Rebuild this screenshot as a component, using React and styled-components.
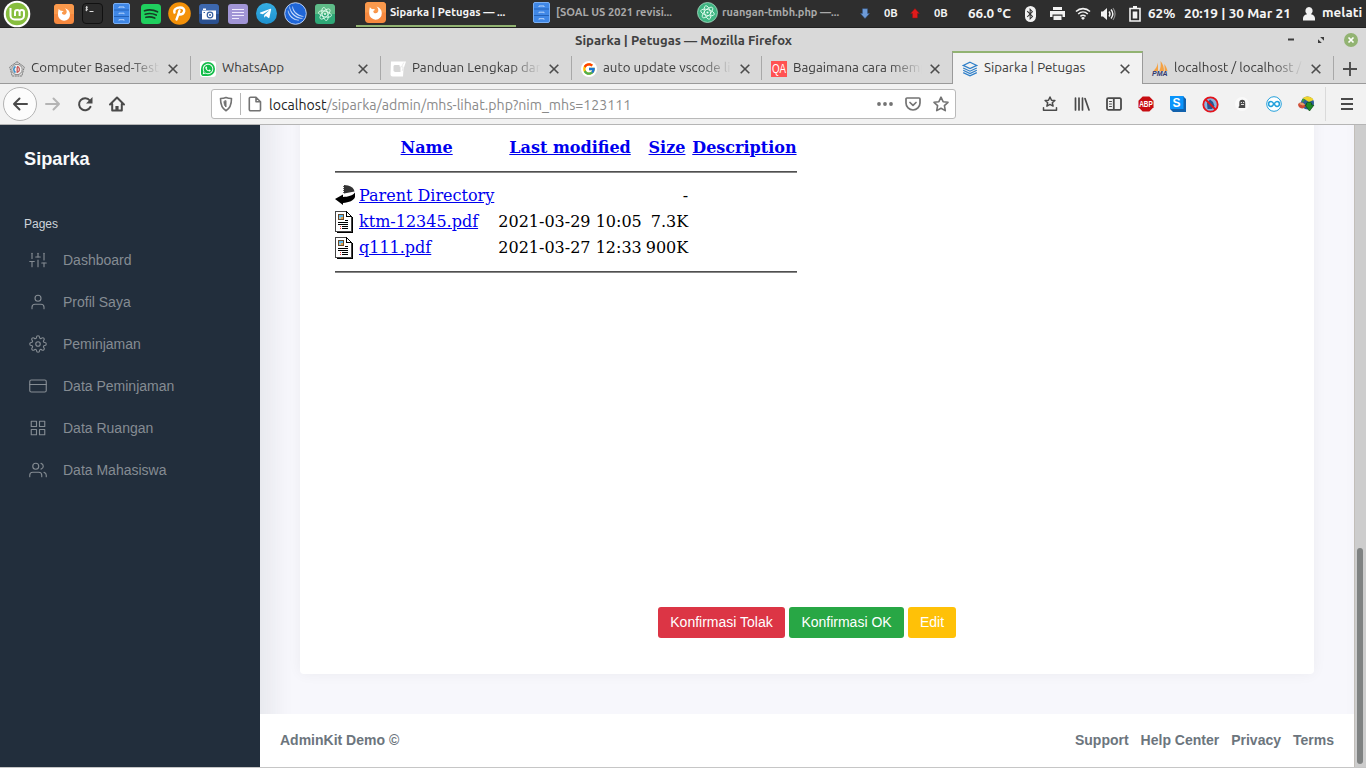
import React from "react";
import styled, { createGlobalStyle, css } from "styled-components";
import { FiUser, FiSettings, FiCreditCard, FiGrid, FiUsers, FiSliders } from "react-icons/fi";
import { FaTelegramPlane, FaWhatsapp, FaBluetoothB } from "react-icons/fa";
import { FcGoogle } from "react-icons/fc";

const Global = createGlobalStyle`
  * { box-sizing: border-box; }
  html, body { margin: 0; padding: 0; overflow: hidden; }
  svg { display: block; flex: none; overflow: visible; }
`;

const UI = `Ubuntu, "Noto Sans", "Open Sans", sans-serif`;

/* ---------- desktop shell ---------- */
const Screen = styled.div`
  width: 1366px;
  height: 768px;
  display: flex;
  flex-direction: column;
  overflow: hidden;
  background: #f1f1f1;
  font-family: ${UI};
`;

const Label = styled.span`
  display: block;
  flex: none;
  width: ${(p) => p.$w}px;
  margin-left: ${(p) => p.$ml || 0}px;
  font-size: ${(p) => p.$size || 13}px;
  font-weight: ${(p) => p.$weight || 400};
  line-height: 18px;
  color: ${(p) => p.$color || "inherit"};
  white-space: nowrap;
`;

const Panel = styled.header`
  height: 28px;
  flex: none;
  display: flex;
  align-items: center;
  background: #2e2e2e;
  border-bottom: 1px solid #222;
  color: #f4f4f4;
  ${Label} { margin-bottom: 2px; }
`;

const Slot = styled.div`
  width: ${(p) => p.$w}px;
  height: 100%;
  flex: none;
  display: flex;
  align-items: center;
  justify-content: center;
  margin-left: ${(p) => p.$ml || 0}px;
`;

const Task = styled.div`
  width: 160px;
  height: 27px;
  flex: none;
  display: flex;
  align-items: center;
  gap: 4px;
  padding-left: 9px;
  margin-left: ${(p) => p.$ml || 0}px;
  border-bottom: 2px solid ${(p) => (p.$active ? "#92b372" : "transparent")};
`;

/* ---------- browser chrome ---------- */
const TitleBar = styled.div`
  height: 23px;
  flex: none;
  display: flex;
  align-items: center;
  background: #d9d9d9;
  color: #404040;
`;

const TabStrip = styled.div`
  height: 33px;
  flex: none;
  display: flex;
  background: #d9d9d9;
`;

const Tab = styled.div`
  width: ${(p) => p.$w}px;
  flex: none;
  display: flex;
  align-items: center;
  padding: 3px 0 0 9px;
  color: #3c3c3c;
  border-bottom: 1px solid #9a9a9a;
  ${(p) =>
    p.$sep &&
    css`
      background: linear-gradient(#a8a8a8, #a8a8a8) right 5px / 1px 24px no-repeat;
    `}
  ${(p) =>
    p.$active &&
    css`
      background: #f2f2f2;
      border: 1px solid #9a9a9a;
      border-top: 2px solid #92b372;
      border-bottom: 0;
      padding-top: 0;
    `}
`;

const TabText = styled.div`
  width: 130px;
  margin: 0 0 1px 6px;
  white-space: nowrap;
  font-size: 13.33px;
  line-height: 20px;
  ${(p) => p.$fade && css`mask-image: linear-gradient(to right, #000 98px, transparent 129px);`}
`;

const CloseSlot = styled.div`
  width: 20px;
  margin-left: ${(p) => (p.$fade ? 2 : 1)}px;
  display: flex;
  justify-content: center;
`;

const Toolbar = styled.div`
  height: 41px;
  flex: none;
  display: flex;
  align-items: center;
  background: #f2f2f2;
  border-bottom: 1px solid #b5b5b5;
  color: #4a4a4a;
`;

const BackButton = styled.div`
  width: 34px;
  height: 34px;
  margin-left: 3px;
  flex: none;
  border-radius: 50%;
  border: 1px solid #b3b3b3;
  background: #fcfcfc;
  display: flex;
  align-items: center;
  justify-content: center;
`;

const UrlBar = styled.div`
  width: 745px;
  height: 30px;
  margin-left: 78px;
  flex: none;
  display: flex;
  align-items: center;
  background: #fff;
  border: 1px solid #b9b9b9;
  border-radius: 3px;
  color: #737373;
`;

const Divider = styled.div`
  width: 1px;
  height: ${(p) => p.$h}px;
  flex: none;
  background: ${(p) => p.$color};
`;

const Url = styled.div`
  width: 600px;
  margin: 2px 0 0 1px;
  font-size: 14.15px;
  line-height: 20px;
  color: #8a8a8a;
  white-space: nowrap;
  b { font-weight: 400; color: #1f1f1f; }
`;

/* ---------- page ---------- */
const Page = styled.div`
  height: 642px;
  flex: none;
  display: flex;
  overflow: hidden;
  font-family: "Liberation Sans", Arial, sans-serif;
  font-size: 14px;
  line-height: 21px;
`;

const Sidebar = styled.nav`
  width: 260px;
  flex: none;
  background: #222e3c;
  padding-top: 21px;
`;

const Brand = styled.div`
  padding-left: 24px;
  font-size: 18.2px;
  line-height: 27px;
  font-weight: 700;
  color: #f8f9fa;
`;

const NavHeader = styled.div`
  margin-top: 42px;
  padding-left: 24px;
  font-size: 12px;
  line-height: 18px;
  color: #ced4da;
`;

const NavList = styled.div`
  padding-top: 6px;
`;

const NavItem = styled.div`
  height: 42px;
  display: flex;
  align-items: center;
  padding-left: 29px;
  gap: 16px;
  color: #858c93;
  svg { width: 18px; height: 18px; stroke-width: 1.5; }
`;

const Main = styled.main`
  width: 1094px;
  height: 682px;
  margin-top: -40px;
  flex: none;
  display: flex;
  flex-direction: column;
  justify-content: space-between;
  background: #f7f7fc;
  box-shadow: inset 12px 0 24px 0 rgba(33, 37, 41, 0.075);
`;

const Card = styled.section`
  height: 589px;
  margin: 0 40px;
  padding: 49px 32px 36px;
  display: flex;
  flex-direction: column;
  justify-content: space-between;
  background: #fff;
  border-radius: 4px;
  box-shadow: 0 0 14px 0 rgba(33, 37, 41, 0.05);
`;

const Listing = styled.table`
  align-self: flex-start;
  border-spacing: 2px;
  font-family: "DejaVu Serif", serif;
  font-size: 16px;
  line-height: 20px;
  color: #000;
  tr:first-child { height: 24px; }
  th, td { padding: 1px; white-space: nowrap; }
  td { vertical-align: middle; }
  td[data-num] { text-align: right; }
  a { color: #0000ee; text-decoration: underline; }
`;

const Rule = styled.hr`
  height: 2px;
  margin: 8px 0;
  border: 0;
  border-top: 1px solid #505050;
  background: #868686;
`;

const Actions = styled.div`
  display: flex;
  justify-content: center;
  gap: 4px;
`;

const Button = styled.button`
  width: ${(p) => p.$w}px;
  height: 31px;
  padding: 0;
  border: 0;
  border-radius: 3px;
  font: 14px/21px "Liberation Sans", Arial, sans-serif;
  color: #fff;
  background: ${(p) => p.$bg};
`;

const Footer = styled.footer`
  height: 53px;
  padding: 0 20px;
  display: flex;
  align-items: center;
  justify-content: space-between;
  background: #fff;
  color: #6c757d;
  font-weight: 700;
`;

const FooterLinks = styled.div`
  display: flex;
  gap: 12px;
`;

const ScrollTrack = styled.div`
  width: 12px;
  flex: none;
  background: #cdcdcd;
  border-left: 1px solid #c2beb9;
  padding: 423px 0 0 2px;
`;

const ScrollThumb = styled.div`
  width: 6px;
  height: 216px;
  border-radius: 3px;
  background: #7f8282;
`;

const BottomEdge = styled.div`
  flex: 1;
  background: #c6c6c6;
`;

/* ---------- drawings ---------- */
const Mint = () => (
  <svg width="28" height="28" viewBox="0 0 28 28">
    <circle cx="14" cy="14" r="13.3" fill="#fff" />
    <circle cx="14" cy="14" r="11.2" fill="#87be3f" />
    <path d="M7.500 8v7.500a4 4 0 0 0 4 4h5.500a4 4 0 0 0 4-4v-3.200a2.200 2.200 0 0 0-4.400 0V16M16.600 12.300a2.300 2.300 0 0 0-4.600 0V16" fill="none" stroke="#fff" strokeWidth="2" />
  </svg>
);
const FirefoxTile = ({ s = 20 }) => (
  <svg width={s} height={s} viewBox="0 0 20 20">
    <rect width="20" height="20" rx="3.5" fill="#f7893f" />
    <path d="M0 10V3.500A3.500 3.500 0 0 1 3.500 0h13A3.500 3.500 0 0 1 20 3.500V10z" fill="#fa994c" />
    <path d="M4.600 5l2.200 1.800c1.200-.3 2.400 0 2.900.8-1.400.3-2 1-1.700 1.900.5 1.300 2.700 1.600 3.900.5 1.400-1.400 1-3.900-.9-5.700 3 .8 5 3.200 5 6.400a6 6 0 0 1-12 .2c0-2 .1-3.900.6-5.900z" fill="#fff" />
  </svg>
);
const Terminal = () => (
  <svg width="21" height="21" viewBox="0 0 21 21">
    <rect x=".5" y=".5" width="20" height="20" rx="3.5" fill="#2b2b2b" stroke="#111" />
    <path d="M5.900 4.300c-2.300-.7-2.600 1-1.300 1.300 1.500.3 1.300 2-1.200 1.400M4.600 3.200v5M7.500 8.500h4" stroke="#ddd" fill="none" />
  </svg>
);
const Cabinet = () => (
  <svg width="17" height="21" viewBox="0 0 17 21">
    <rect x=".5" y=".5" width="16" height="20" rx="1.5" fill="#3f87e6" stroke="#79aef2" />
    <path d="M1 7h15M1 13.500h15" stroke="#2462b8" />
    <path d="M6 5V4h5v1M6 11.200v-1h5v1M6 17.700v-1h5v1" stroke="#b9d5fb" fill="none" />
  </svg>
);
const Spotify = () => (
  <svg width="20" height="20" viewBox="0 0 20 20">
    <rect width="20" height="20" rx="3.5" fill="#1fd05e" />
    <path d="M3.500 6.800c4.500-1.500 9-1 13 1M4.200 10.200c4-1.200 7.800-.7 11 .9M4.900 13.300c3.200-.9 6-.5 8.800.8" stroke="#163d25" strokeWidth="1.7" strokeLinecap="round" fill="none" />
  </svg>
);
const PCircle = () => (
  <svg width="23" height="23" viewBox="0 0 23 23">
    <circle cx="11.5" cy="11.5" r="11.3" fill="#f39109" />
    <path d="M6.500 10.500c-1-3 2-5 5.500-5 3.200 0 4.600 1.600 4.200 3.800-.5 2.500-2.700 3.400-5.400 3.200M11.500 8.500c-.8 3-1.800 6-3 9" stroke="#fff" strokeWidth="2.4" fill="none" strokeLinecap="round" />
  </svg>
);
const Camera = () => (
  <svg width="20" height="20" viewBox="0 0 20 20">
    <rect width="20" height="20" rx="3.5" fill="#2b5190" />
    <path d="M0 10V3.500A3.500 3.500 0 0 1 3.500 0h13A3.500 3.500 0 0 1 20 3.500V10z" fill="#3d68ae" />
    <path d="M3 6.500h14v9H3zM4 4.500h3V6H4z" fill="#fff" />
    <circle cx="11" cy="11" r="3.4" fill="#345e9f" />
    <circle cx="11" cy="11" r="2.2" fill="#fff" />
    <circle cx="11" cy="11" r="1" fill="#345e9f" />
    <path d="M4.500 8.500h1.500" stroke="#345e9f" />
  </svg>
);
const Notes = () => (
  <svg width="20" height="20" viewBox="0 0 20 20">
    <rect width="20" height="20" rx="3" fill="#a195d6" />
    <path d="M4 5.500h12M4 8.500h12M4 11.500h12M4 14.500h7" stroke="#eeeafd" strokeWidth="1.2" />
  </svg>
);
const TelegramBase = styled.div`
  width: 21px;
  height: 21px;
  border-radius: 50%;
  background: linear-gradient(#36aee2, #1e92cf);
  color: #fff;
  font-size: 13px;
  display: flex;
  align-items: center;
  justify-content: center;
  padding-right: 2px;
`;
const Swoosh = () => (
  <svg width="23" height="23" viewBox="0 0 23 23">
    <circle cx="11.5" cy="11.5" r="10.8" fill="#1f66d8" stroke="#c8d9f5" strokeWidth=".9" />
    <path d="M5.500 4.500C6.500 10 11 15 18.500 16.500 12 17 6 12 5.500 4.500zM8.500 4.500C9.500 9 13 13 19.500 14.500 13 14.500 8.500 10 8.500 4.500zM4 8.500c1.500 5 5 8.500 11 9.700-6 .3-10.500-4-11-9.700z" stroke="#dce9ff" strokeWidth=".3" fill="#dce9ff" />
  </svg>
);
const Atom = ({ round, s = 20 }) => (
  <svg width={s} height={s} viewBox="0 0 20 20">
    {round ? (
      <circle cx="10" cy="10" r="9.5" fill="#3fb582" stroke="#a9dcc4" strokeWidth=".8" />
    ) : (
      <>
        <rect width="20" height="20" rx="3.5" fill="#2ea877" />
        <path d="M0 10V3.500A3.500 3.500 0 0 1 3.500 0h13A3.500 3.500 0 0 1 20 3.500V10z" fill="#5fbb88" />
      </>
    )}
    <g fill="none" stroke="#e8fff3" strokeWidth=".8">
      <ellipse cx="10" cy="10" rx="6.6" ry="2.8" transform="rotate(15 10 10)" />
      <ellipse cx="10" cy="10" rx="6.6" ry="2.8" transform="rotate(75 10 10)" />
      <ellipse cx="10" cy="10" rx="6.6" ry="2.8" transform="rotate(135 10 10)" />
    </g>
    <circle cx="10" cy="10" r="1" fill="#e8fff3" />
  </svg>
);
const Arrow = ({ up }) => (
  <svg width="10" height="11" viewBox="0 0 10 11">
    {up ? (
      <path d="M5 .5L9.500 5.500H7.500V10h-5V5.500H.5z" fill="#e01b1b" stroke="#8d1212" strokeWidth=".5" />
    ) : (
      <path d="M5 10.500L.5 5.500h2V.7h5v4.800h2z" fill="#6d9bd8" stroke="#35588d" strokeWidth=".5" />
    )}
  </svg>
);
const Bluetooth = styled.div`
  width: 11px;
  height: 16px;
  border-radius: 6px;
  background: #f2f2f2;
  color: #2e2e2e;
  font-size: 12px;
  display: flex;
  align-items: center;
  justify-content: center;
`;
const Printer = () => (
  <svg width="15" height="13" viewBox="0 0 15 13">
    <path d="M3 0h9v3H3zM0 4h15v6h-2.500V7.500h-10V10H0zM3.500 8.800h8V13h-8z" fill="#f2f2f2" />
  </svg>
);
const Wifi = () => (
  <svg width="16" height="13" viewBox="0 0 16 13">
    <path d="M1 4.500C5 .6 11 .6 15 4.500M3.200 7C6 4.400 10 4.400 12.800 7M5.400 9.300c1.600-1.300 3.600-1.300 5.200 0" stroke="#f2f2f2" strokeWidth="1.6" fill="none" />
    <path d="M6 11l2-1.300L10 11l-2 2z" fill="#f2f2f2" />
  </svg>
);
const Sound = () => (
  <svg width="16" height="14" viewBox="0 0 16 14">
    <path d="M1 4.500h2L7 1v12L3 9.500H1z" fill="#f2f2f2" />
    <path d="M9 4.500c1.200 1.500 1.200 3.500 0 5M11 2.500c2.200 2.700 2.200 6.300 0 9" stroke="#f2f2f2" strokeWidth="1.4" fill="none" />
    <path d="M13 1.200c2.500 3.500 2.500 8.100 0 11.600" stroke="#888" strokeWidth="1.2" fill="none" />
  </svg>
);
const Battery = () => (
  <svg width="12" height="16" viewBox="0 0 12 16">
    <path d="M1 2.500h10V15H1z" fill="none" stroke="#f2f2f2" strokeWidth="1.6" />
    <path d="M4 0h4v2H4zM3.700 5.500h4.600v7H3.700z" fill="#f2f2f2" />
  </svg>
);
const Person = () => (
  <svg width="12" height="14" viewBox="0 0 12 14">
    <path d="M6 0a3.600 3.900 0 0 1 2 7.200c2.500.6 4 2 4 4.300V13.500H0v-2c0-2.300 1.500-3.700 4-4.300A3.600 3.900 0 0 1 6 0z" fill="#f2f2f2" />
  </svg>
);
const Minimize = () => (
  <svg width="6" height="3" viewBox="0 0 6 3"><path d="M0 .5h6v2H0z" fill="#3c3c3c" /></svg>
);
const Restore = () => (
  <svg width="6" height="6" viewBox="0 0 7 7"><path d="M2.500 0H7v4.500zM0 2.500V7h4.500z" fill="#3c3c3c" /></svg>
);
const WindowClose = () => (
  <svg width="14" height="14" viewBox="0 0 14 14">
    <circle cx="7" cy="7" r="7" fill="#92b372" />
    <path d="M4.500 4.500l5 5M9.500 4.500l-5 5" stroke="#fff" strokeWidth="1.7" />
  </svg>
);
const Close = () => (
  <svg width="10" height="10" viewBox="0 0 10 10"><path d="M.7.700l8.600 8.600M9.300.700L.7 9.300" stroke="#4c4c4c" strokeWidth="1.6" /></svg>
);
const Crest = () => (
  <svg width="16" height="16" viewBox="0 0 16 16">
    <path d="M8 .7L15.300 6 12.800 15H3.200L.7 6z" fill="#dadada" stroke="#777" strokeDasharray="2 .6" />
    <circle cx="8" cy="8.5" r="5.2" fill="#eee" stroke="#888" />
    <path d="M6.500 5.500a3.500 3.500 0 0 0 0 6" stroke="#3d8fc4" strokeWidth="1.6" fill="none" />
    <path d="M8 5.500a3 3 0 0 1 1 5.500M8.200 6v6" stroke="#c85757" strokeWidth="1.3" fill="none" />
  </svg>
);
const WhatsappTile = styled.div`
  width: 16px;
  height: 16px;
  border-radius: 3px;
  background: #fff;
  display: flex;
  align-items: center;
  justify-content: center;
`;
const WhatsappBubble = styled.span`
  width: 14px;
  height: 14px;
  border-radius: 50% 50% 50% 20%;
  background: #12bd49;
  color: #fff;
  font-size: 12px;
  display: flex;
  align-items: center;
  justify-content: center;
`;
const Guide = () => (
  <svg width="16" height="16" viewBox="0 0 16 16">
    <path d="M1 .5h15L13.500 8 13 15.500H2.500A2 2 0 0 1 .5 13.500z" fill="#fff" />
    <path d="M4.500 4h5v1.500h1v5.500H5L3.500 10V5z" fill="#d6d6d6" />
    <path d="M13.800 1.500L11.500 6h1.700l-1 4" stroke="#e2e2e2" strokeWidth=".7" fill="none" />
  </svg>
);
const GoogleTile = styled.div`
  width: 16px;
  height: 16px;
  border-radius: 50%;
  background: #fff;
  font-size: 14px;
  display: flex;
  align-items: center;
  justify-content: center;
`;
const Qa = () => (
  <svg width="16" height="16" viewBox="0 0 16 16">
    <rect width="16" height="16" fill="#ff5252" />
    <text x=".9" y="12" textLength="14.2" lengthAdjust="spacingAndGlyphs" fontFamily="Liberation Sans" fontSize="12" fill="#fff">QA</text>
  </svg>
);
const Stack = () => (
  <svg width="16" height="16" viewBox="0 0 16 16" fill="none" stroke="#2f7fc8" strokeWidth="1.2">
    <path d="M8 1.200L14.800 4.400 8 7.600 1.200 4.400zM1.200 7L8 10.200 14.800 7M1.200 9.300L8 12.500l6.800-3.200M1.200 11.600L8 14.800l6.800-3.200" />
  </svg>
);
const Sail = () => (
  <svg width="16" height="16" viewBox="0 0 16 16">
    <path d="M6 1.500v8.500H1.500C4 7.500 5.300 5 6 1.500zM8.500 0c2.500 3 3.500 6 3.500 10H7.200c1.600-3 1.800-6 1.300-10zM12.300 3c1.700 2.300 2.700 4.500 3.200 7h-2.700z" fill="#f5a243" />
    <text x="0" y="15" textLength="15.5" lengthAdjust="spacingAndGlyphs" fontFamily="Liberation Sans" fontWeight="700" fontStyle="italic" fontSize="6.5" fill="#2f376f">PMA</text>
  </svg>
);
const Plus = () => (
  <svg width="14" height="14" viewBox="0 0 14 14"><path d="M7 0v14M0 7h14" stroke="#4c4c4c" strokeWidth="1.9" /></svg>
);
const Stroke = ({ d, s = 16, w = 2, c = "currentColor", children }) => (
  <svg width={s} height={s} viewBox="0 0 16 16" fill="none" stroke={c} strokeWidth={w} strokeLinecap="round" strokeLinejoin="round">
    <path d={d} />
    {children}
  </svg>
);
const Shield = () => (
  <Stroke w={1.6} d="M8 1.500c1.800.8 3.400 1 5.500 1 0 5.500-.7 9.500-5.500 12.200C3.200 12 2.500 8 2.500 2.500c2.100 0 3.700-.2 5.500-1z">
    <path d="M8 5v6C6.500 9.800 6.100 8 6 5.700z" fill="currentColor" strokeWidth="1" />
  </Stroke>
);
const Doc = () => <Stroke w={1.6} d="M3.500 1.200h5.500l4.500 4.500v7.800a1.200 1.200 0 0 1-1.200 1.200H3.500a1.200 1.200 0 0 1-1.200-1.200V2.400a1.200 1.200 0 0 1 1.200-1.200zM9 1.500V5.700h4.200" />;
const Dots = () => (
  <svg width="16" height="4" viewBox="0 0 16 4" fill="#737373"><circle cx="2" cy="2" r="1.9" /><circle cx="8" cy="2" r="1.9" /><circle cx="14" cy="2" r="1.9" /></svg>
);
const Pocket = () => <Stroke w={1.7} d="M2 2h12a1 1 0 0 1 1 1v4a7 7 0 0 1-14 0V3a1 1 0 0 1 1-1zM5 6.500l3 2.800 3-2.800" />;
const Star = () => <Stroke w={1.6} d="M8 1.200l2.100 4.500 4.900.6-3.600 3.400.9 4.900L8 12.200l-4.300 2.400.9-4.900L1 6.300l4.900-.6z" />;
const BackArrow = () => <Stroke d="M15 8H2M7.500 2.500L2 8l5.500 5.500" />;
const Forward = () => <Stroke c="#b4b4b4" d="M1 8h13M8.500 2.500L14 8l-5.500 5.500" />;
const Reload = () => (
  <svg width="16" height="16" viewBox="0 0 16 16" fill="none" stroke="#4a4a4a" strokeWidth="2">
    <path d="M13.500 10.800A6 6 0 1 1 12.800 4.500" strokeLinecap="round" />
    <path d="M15.500 1v6.500H9z" fill="#4a4a4a" stroke="none" />
  </svg>
);
const Home = () => (
  <Stroke w={2} d="M1 8.500L8 1.500l7 7M3.200 8v6.500h9.600V8">
    <path d="M8 14V10" strokeWidth="3.2" strokeLinecap="butt" />
  </Stroke>
);
const StarTray = () => <Stroke w={1.5} d="M8 1l1.500 3.200 3.400.3-2.600 2.300.8 3.300L8 8.400 4.900 10.100l.8-3.300-2.600-2.300 3.400-.3zM1.500 11.800v2.500h13v-2.500" />;
const Library = () => <Stroke w={1.7} d="M1.500 2v12M5 2v12M8.500 2v12M11 2.500L15 14" />;
const SidebarIcon = () => (
  <Stroke w={1.8} d="M2.200 2.200h11.600a1.200 1.200 0 0 1 1.200 1.200v9.200a1.200 1.200 0 0 1-1.200 1.200H2.200A1.200 1.200 0 0 1 1 12.600V3.400a1.200 1.200 0 0 1 1.200-1.200zM7.800 2.200v11.600">
    <path d="M3.500 5.500h2M3.500 8h2M3.500 10.500h2" strokeWidth="1" />
  </Stroke>
);
const Abp = () => (
  <svg width="16" height="16" viewBox="0 0 17 17">
    <path d="M5 .5h7L16.500 5v7L12 16.500H5L.5 12V5z" fill="#c70d12" />
    <text x="1.3" y="11.7" textLength="14.4" lengthAdjust="spacingAndGlyphs" fontFamily="Liberation Sans" fontWeight="700" fontSize="9" fill="#fff">ABP</text>
  </svg>
);
const SBox = () => (
  <svg width="16" height="16" viewBox="0 0 16 16">
    <path d="M0 0h13l3 3v13H3l-3-3z" fill="#1262ad" />
    <path d="M0 0h13.500v13H0z" fill="#0a94fb" />
    <text x="2.6" y="10.8" fontFamily="Liberation Sans" fontWeight="700" fontSize="12" fill="#fff">S</text>
  </svg>
);
const Blocked = () => (
  <svg width="17" height="17" viewBox="0 0 17 17">
    <circle cx="8.5" cy="8.5" r="7" fill="#8ab4de" />
    <path d="M5 7l3-3.500 3 2.500 1.500 4-2.500 3H5.500z" fill="#2a5590" />
    <circle cx="8.5" cy="8.5" r="7.2" fill="none" stroke="#e3131b" strokeWidth="1.8" />
    <path d="M3.500 3.500l10 10" stroke="#e3131b" strokeWidth="1.8" />
  </svg>
);
const Ghost = () => (
  <svg width="16" height="16" viewBox="0 0 16 16">
    <circle cx="8" cy="8" r="7" fill="#fafafa" />
    <path d="M4.800 12l-.3-1 .8-1V6.700A2.900 2.900 0 0 1 11.200 6.700V12z" fill="#4a4a4a" />
    <path d="M6.800 6.500h1.200M9 6.500h1.200M7 8.500h3" stroke="#eee" strokeWidth=".9" />
  </svg>
);
const Infinity = () => (
  <svg width="16" height="16" viewBox="0 0 16 16">
    <circle cx="8" cy="8" r="7.3" fill="#fff" stroke="#23a0db" />
    <path d="M8 8C6.800 6.300 6 5.600 5 5.600a2.400 2.400 0 0 0 0 4.800c1 0 1.800-.7 3-2.400s2-2.400 3-2.400a2.400 2.400 0 0 1 0 4.800c-1 0-1.800-.7-3-2.400z" fill="none" stroke="#23a0db" strokeWidth="1.5" />
  </svg>
);
const Globe = () => (
  <svg width="17" height="16" viewBox="0 0 17 16">
    <circle cx="9.5" cy="7" r="6.5" fill="#2b5d98" />
    <path d="M4.500 2C8.500-.8 14 .2 15.500 4L11 6z" fill="#f0d52c" />
    <path d="M4 3l3.500 0-3 4z" fill="#3f9a3c" />
    <path d="M0 8.500c1-2 3-2.500 5-1.500l3 3-3 2.500C2 12.500.3 11 0 8.500z" fill="#ce4a35" />
    <path d="M1 8c2-2 4-1.500 6 .5l-2 1z" fill="#e6a06a" />
    <path d="M8.500 7c0-1 5-1 5 0v2h2.500L11.500 15 7 9h1.500z" fill="#1f8a24" stroke="#0f4a16" strokeWidth=".7" />
  </svg>
);
const Menu = () => (
  <svg width="12" height="12" viewBox="0 0 12 12"><path d="M0 1h12M0 6h12M0 11h12" stroke="#4a4a4a" strokeWidth="1.8" /></svg>
);
const ParentIcon = () => (
  <svg width="20" height="22" viewBox="0 0 20 22">
    <path d="M9 0l4 .5c4 1 6 3 6.500 6L9 8.500z" fill="#333" />
    <path d="M8.500 1v7" stroke="#666" strokeDasharray="1 1" />
    <path d="M20 7.500v4.500c-1 3.500-6 5.500-12 6V20L0 14l8-4.500V12c5-.2 10-1.500 12-4.500z" fill="#000" />
  </svg>
);
const FileIcon = () => (
  <svg width="20" height="22" viewBox="0 0 20 22" shapeRendering="crispEdges">
    <path d="M.5.500h11l5 5v15H.5z" fill="#fff" stroke="#444" />
    <path d="M2 21.500h15.500V6" stroke="#000" fill="none" />
    <path d="M11.500.500v5h5z" fill="#fff" stroke="#000" />
    <path d="M3 3h6v6H3z" fill="#6b4a2a" />
    <path d="M4 4h4v2H4z" fill="#58b7ee" />
    <path d="M4 6h4v2H4z" fill="#9cc6d8" />
    <path d="M6 6h2v2H6z" fill="#e0a44c" />
    <path d="M10 9.500h3M3 11.500h10M3 13.500h10M7 15.500h6M7 17.500h6" stroke="#000" />
    <path d="M5 15.500h1M5 17.500h1" stroke="#e33" />
  </svg>
);

/* ---------- data ---------- */
const tabs = [
  { t: "Computer Based-Test", icon: <Crest />, w: 191, fade: true, sep: true },
  { t: "WhatsApp", icon: <WhatsappTile><WhatsappBubble><FaWhatsapp /></WhatsappBubble></WhatsappTile>, w: 190, sep: true },
  { t: "Panduan Lengkap dan", icon: <Guide />, w: 191, fade: true, sep: true },
  { t: "auto update vscode li", icon: <GoogleTile><FcGoogle /></GoogleTile>, w: 190, fade: true, sep: true },
  { t: "Bagaimana cara memp", icon: <Qa />, w: 190, fade: true },
  { t: "Siparka | Petugas", icon: <Stack />, w: 191, active: true },
  { t: "localhost / localhost /", icon: <Sail />, w: 191, fade: true, sep: true },
];

const nav = [
  ["Dashboard", FiSliders],
  ["Profil Saya", FiUser],
  ["Peminjaman", FiSettings],
  ["Data Peminjaman", FiCreditCard],
  ["Data Ruangan", FiGrid],
  ["Data Mahasiswa", FiUsers],
];

const files = [
  { name: "Parent Directory", date: "", size: "-", Icon: ParentIcon },
  { name: "ktm-12345.pdf", date: "2021-03-29 10:05", size: "7.3K", Icon: FileIcon },
  { name: "q111.pdf", date: "2021-03-27 12:33", size: "900K", Icon: FileIcon },
];

const launchers = [
  <FirefoxTile />, <Terminal />, <Cabinet />, <Spotify />, <PCircle />, <Camera />, <Notes />,
  <TelegramBase><FaTelegramPlane /></TelegramBase>, <Swoosh />, <Atom />,
];

const extensions = [<StarTray />, <Library />, <SidebarIcon />, <Abp />, <SBox />, <Blocked />, <Ghost />, <Infinity />, <Globe />];

export default function App() {
  return (
    <Screen>
      <Global />
      <Panel>
        <Slot $w={28} $ml={3}><Mint /></Slot>
        <Slot $w={18} />
        {launchers.map((icon, i) => <Slot key={i} $w={29}>{icon}</Slot>)}
        <Task $active $ml={17}><FirefoxTile s={21} /><Label $w={120} $size={11.2} $weight={700}>Siparka | Petugas — ...</Label></Task>
        <Task $ml={8}><Cabinet /><Label $w={120} $ml={2} $size={11.1} $weight={700} $color="#a9a9a9">[SOAL US 2021 revisi...</Label></Task>
        <Task $ml={4}><Atom round s={21} /><Label $w={120} $size={11} $weight={700} $color="#a9a9a9">ruangan-tmbh.php —...</Label></Task>
        <Slot $w={10} $ml={12}><Arrow /></Slot>
        <Label $w={14} $ml={14} $size={11.2} $weight={700}>0B</Label>
        <Slot $w={10} $ml={12}><Arrow up /></Slot>
        <Label $w={14} $ml={14} $size={11.2} $weight={700}>0B</Label>
        <Label $w={46} $ml={20} $size={13.5} $weight={700}>66.0 °C</Label>
        <Slot $w={12} $ml={10}><Bluetooth><FaBluetoothB /></Bluetooth></Slot>
        <Slot $w={16} $ml={13}><Printer /></Slot>
        <Slot $w={16} $ml={10}><Wifi /></Slot>
        <Slot $w={16} $ml={9}><Sound /></Slot>
        <Slot $w={12} $ml={13}><Battery /></Slot>
        <Label $w={30} $ml={7} $size={13.5} $weight={700}>62%</Label>
        <Label $w={110} $ml={6} $size={13.6} $weight={700}>20:19 | 30 Mar 21</Label>
        <Slot $w={12} $ml={9}><Person /></Slot>
        <Label $w={42} $ml={7} $size={13.4} $weight={700}>melati</Label>
      </Panel>

      <TitleBar>
        <Label $w={220} $ml={575} $size={13.1} $weight={600}>Siparka | Petugas — Mozilla Firefox</Label>
        <Slot $w={8} $ml={492}><Minimize /></Slot>
        <Slot $w={8} $ml={22}><Restore /></Slot>
        <Slot $w={14} $ml={19}><WindowClose /></Slot>
      </TitleBar>

      <TabStrip>
        {tabs.map((tab) => (
          <Tab key={tab.t} $w={tab.w} $active={tab.active} $sep={tab.sep}>
            {tab.icon}
            <TabText $fade={tab.fade}>{tab.t}</TabText>
            <CloseSlot $fade={tab.fade}><Close /></CloseSlot>
          </Tab>
        ))}
        <Tab $w={32}><Plus /></Tab>
      </TabStrip>

      <Toolbar>
        <BackButton><BackArrow /></BackButton>
        <Slot $w={32}><Forward /></Slot>
        <Slot $w={32}><Reload /></Slot>
        <Slot $w={32}><Home /></Slot>
        <UrlBar>
          <Slot $w={28}><Shield /></Slot>
          <Divider $h={22} $color="#b5b5b5" />
          <Slot $w={27}><Doc /></Slot>
          <Url><b>localhost</b>/siparka/admin/mhs-lihat.php?nim_mhs=123111</Url>
          <Slot $w={28} $ml={2}><Dots /></Slot>
          <Slot $w={28}><Pocket /></Slot>
          <Slot $w={28}><Star /></Slot>
        </UrlBar>
        <Slot $w={78} />
        {extensions.map((icon, i) => <Slot key={i} $w={32}>{icon}</Slot>)}
        <Slot $w={3} />
        <Divider $h={34} $color="#dadada" />
        <Slot $w={42}><Menu /></Slot>
      </Toolbar>

      <Page>
        <Sidebar>
          <Brand>Siparka</Brand>
          <NavHeader>Pages</NavHeader>
          <NavList>
            {nav.map(([name, Icon]) => (
              <NavItem key={name}><Icon /><span>{name}</span></NavItem>
            ))}
          </NavList>
        </Sidebar>
        <Main>
          <Card>
            <Listing>
              <tbody>
                <tr>
                  <th />
                  <th><a>Name</a></th>
                  <th><a>Last modified</a></th>
                  <th><a>Size</a></th>
                  <th><a>Description</a></th>
                </tr>
                <tr><th colSpan={5}><Rule /></th></tr>
                {files.map(({ name, date, size, Icon }) => (
                  <tr key={name}>
                    <td><Icon /></td>
                    <td><a>{name}</a></td>
                    <td data-num>{date}</td>
                    <td data-num>{size}</td>
                    <td />
                  </tr>
                ))}
                <tr><th colSpan={5}><Rule /></th></tr>
              </tbody>
            </Listing>
            <Actions>
              <Button $w={127} $bg="#dc3545">Konfirmasi Tolak</Button>
              <Button $w={115} $bg="#28a745">Konfirmasi OK</Button>
              <Button $w={48} $bg="#ffc107">Edit</Button>
            </Actions>
          </Card>
          <Footer>
            <span>AdminKit Demo ©</span>
            <FooterLinks>
              <span>Support</span>
              <span>Help Center</span>
              <span>Privacy</span>
              <span>Terms</span>
            </FooterLinks>
          </Footer>
        </Main>
        <ScrollTrack><ScrollThumb /></ScrollTrack>
      </Page>
      <BottomEdge />
    </Screen>
  );
}
